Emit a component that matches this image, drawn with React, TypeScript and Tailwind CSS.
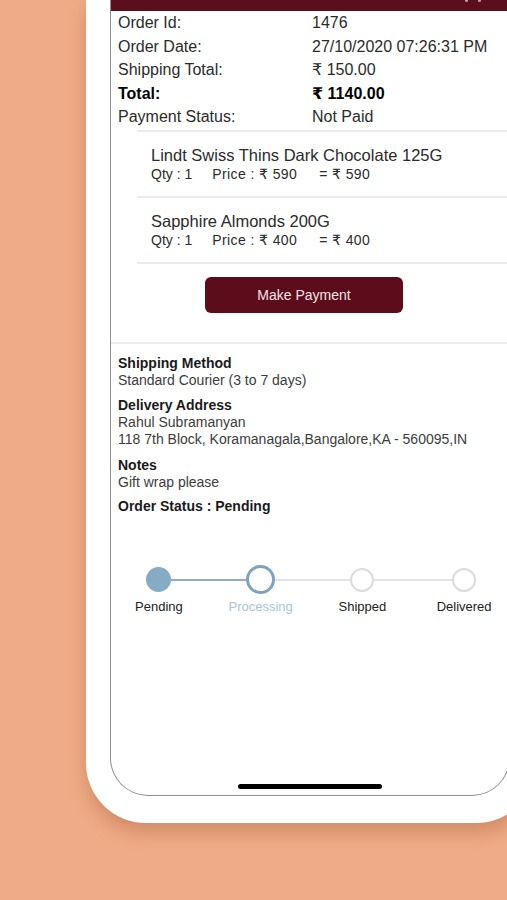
import React from 'react';

const font = { fontFamily: '"Liberation Sans", "DejaVu Sans", Arial, sans-serif' };

const summary = [
  { label: 'Order Id:', value: '1476' },
  { label: 'Order Date:', value: '27/10/2020 07:26:31 PM' },
  { label: 'Shipping Total:', value: '₹ 150.00' },
  { label: 'Total:', value: '₹ 1140.00', bold: true },
  { label: 'Payment Status:', value: 'Not Paid' },
];

const items = [
  { name: 'Lindt Swiss Thins Dark Chocolate 125G', qty: 1, price: 590 },
  { name: 'Sapphire Almonds 200G', qty: 1, price: 400 },
];

const steps = ['Pending', 'Processing', 'Shipped', 'Delivered'];

function Stepper() {
  return (
    <div className="ml-[-3px] w-[407px] grid grid-cols-4">
      {steps.map((s, i) => (
        <div key={s} className="flex flex-col items-center">
          <div className="flex items-center w-full h-[29px]">
            <div
              className={`flex-1 h-[2px] ${
                i === 0 ? 'bg-transparent' : i === 1 ? 'bg-[#8db0c8]' : 'bg-[#e3e3e3]'
              }`}
            />
            {i === 0 && <div className="w-[25px] h-[25px] rounded-full bg-[#86abc5]" />}
            {i === 1 && (
              <div className="w-[29px] h-[29px] rounded-full border-[3px] border-[#7da3be] bg-white" />
            )}
            {i > 1 && (
              <div className="w-[24px] h-[24px] rounded-full border-2 border-[#dcdcdc] bg-white" />
            )}
            <div
              className={`flex-1 h-[2px] ${
                i === 3 ? 'bg-transparent' : i === 0 ? 'bg-[#8db0c8]' : 'bg-[#e3e3e3]'
              }`}
            />
          </div>
          <div
            className={`mt-[5px] text-[13px] leading-[16px] ${
              i === 1 ? 'text-[#a9c5d7]' : 'text-[#222222]'
            }`}
          >
            {s}
          </div>
        </div>
      ))}
    </div>
  );
}

export default function App() {
  return (
    <div className="w-[507px] h-[900px] overflow-hidden bg-[#efab87]" style={font}>
      {/* phone frame */}
      <div className="ml-[86px] w-[450px] h-[823px] bg-white rounded-b-[60px] pl-[24px] pb-[27px] shadow-[0_10px_18px_rgba(140,60,25,0.28)]">
        <div className="relative w-[400px] h-[796px] border-x border-b border-[#8e8e8e] rounded-b-[38px] overflow-hidden flex flex-col">
          {/* header remnant */}
          <div className="h-[11px] bg-[#5b0e1d] flex justify-end items-start pr-[28px] gap-[10px]">
            <div className="w-[3px] h-[2px] bg-[#c99aa3] rounded-b" />
            <div className="w-[3px] h-[2px] bg-[#c99aa3] rounded-b" />
          </div>

          {/* order summary */}
          <div className="text-[16px] leading-[23.6px]">
            {summary.map((r) => (
              <div key={r.label} className={`flex ${r.bold ? 'font-bold text-black' : 'text-[#2b2b2b]'}`}>
                <div className="w-[201px] pl-[7px] shrink-0">{r.label}</div>
                <div>{r.value}</div>
              </div>
            ))}
          </div>

          {/* items */}
          <div className="ml-[26px] mt-[1px]">
            {items.map((it) => (
              <div key={it.name} className="border-t-2 border-[#ebebeb] h-[66px] pl-[14px] pt-[13.5px] text-[#2b2b2b]">
                <div className="text-[16.5px] leading-[20px]">{it.name}</div>
                <div className="text-[14px] leading-[19px] flex">
                  <span>Qty : {it.qty}</span>
                  <span className="ml-[20px] tracking-[0.4px]">Price : ₹ {it.price}</span>
                  <span className="ml-[22px] tracking-[0.4px]">= ₹ {it.qty * it.price}</span>
                </div>
              </div>
            ))}
            <div className="border-t-2 border-[#ebebeb]" />
          </div>

          <button
            type="button"
            className="ml-[94px] mt-[13px] w-[198px] h-[36px] pt-[2px] rounded-[6px] bg-[#5c0c1b] text-[#f3e4e6] text-[14px]"
          >
            Make Payment
          </button>

          <div className="mt-[29px] border-t-2 border-[#eeeeee]" />

          {/* details */}
          <div className="pl-[7px] pt-[11px] text-[14px] leading-[17px]">
            <div>
              <div className="font-bold text-[#1a1a1a]">Shipping Method</div>
              <div className="text-[#3c3c3c]">Standard Courier (3 to 7 days)</div>
            </div>
            <div className="mt-[8.5px]">
              <div className="font-bold text-[#1a1a1a]">Delivery Address</div>
              <div className="text-[#3c3c3c]">Rahul Subramanyan</div>
              <div className="text-[#3c3c3c]">118 7th Block, Koramanagala,Bangalore,KA - 560095,IN</div>
            </div>
            <div className="mt-[8.5px]">
              <div className="font-bold text-[#1a1a1a]">Notes</div>
              <div className="text-[#3c3c3c]">Gift wrap please</div>
            </div>
            <div className="mt-[7.5px] font-bold text-[#1a1a1a]">Order Status : Pending</div>
          </div>

          <div className="mt-[50px]">
            <Stepper />
          </div>

          <div className="absolute bottom-[6px] left-1/2 -translate-x-1/2 w-[144px] h-[5px] rounded-full bg-black" />
        </div>
      </div>
    </div>
  );
}
